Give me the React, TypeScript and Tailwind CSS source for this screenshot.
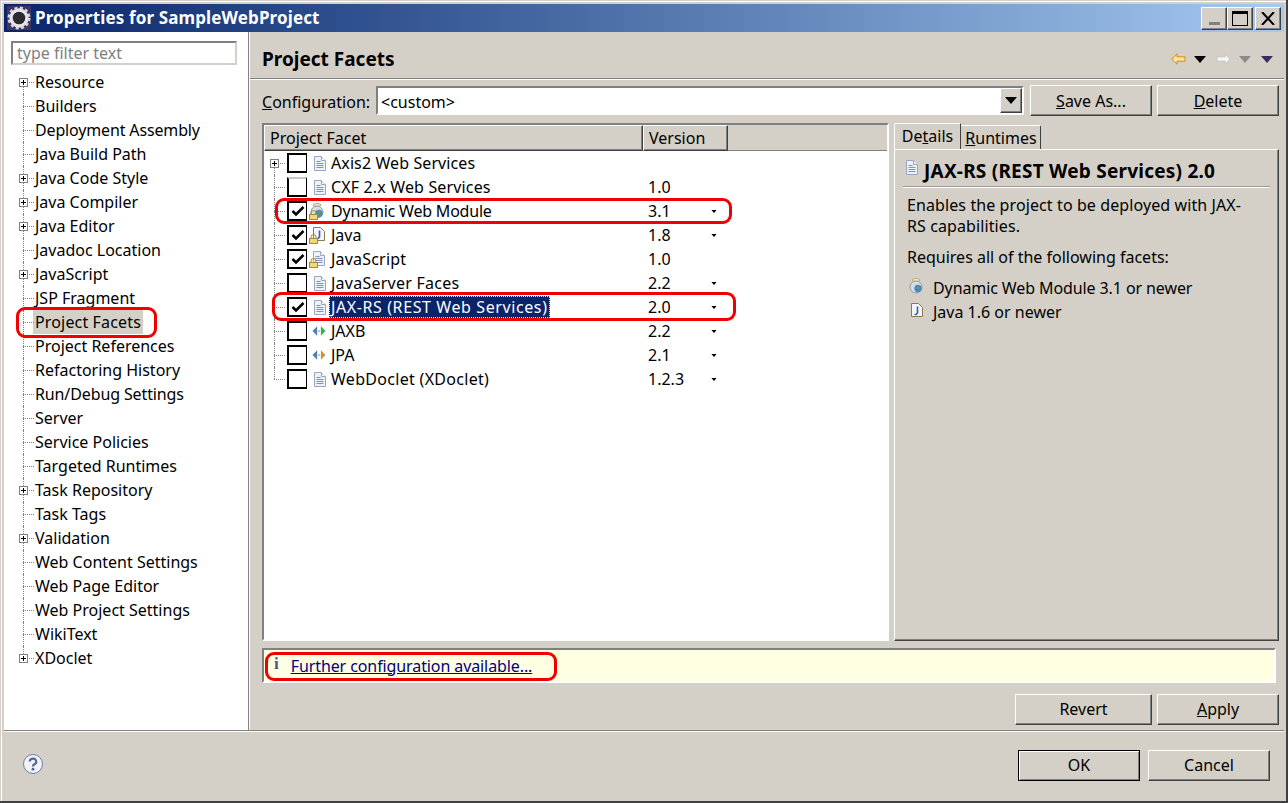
const prefNodes: { label: string; plus?: boolean; selected?: boolean; fit?: string }[] = [
  { label: "Resource", plus: true },
  { label: "Builders" },
  { label: "Deployment Assembly", fit: "tracking-[-0.15px]" },
  { label: "Java Build Path" },
  { label: "Java Code Style", plus: true },
  { label: "Java Compiler", plus: true },
  { label: "Java Editor", plus: true },
  { label: "Javadoc Location" },
  { label: "JavaScript", plus: true },
  { label: "JSP Fragment" },
  { label: "Project Facets", selected: true, fit: "tracking-[0.15px]" },
  { label: "Project References" },
  { label: "Refactoring History" },
  { label: "Run/Debug Settings", fit: "tracking-[-0.12px]" },
  { label: "Server" },
  { label: "Service Policies" },
  { label: "Targeted Runtimes" },
  { label: "Task Repository", plus: true },
  { label: "Task Tags" },
  { label: "Validation", plus: true },
  { label: "Web Content Settings" },
  { label: "Web Page Editor" },
  { label: "Web Project Settings" },
  { label: "WikiText" },
  { label: "XDoclet", plus: true },
];

type IconKind = "doc" | "web" | "java" | "js" | "jaxb" | "jpa";

const facets: {
  label: string;
  version: string;
  icon: IconKind;
  checked?: boolean;
  menu?: boolean;
  plus?: boolean;
  selected?: boolean;
  fit?: string;
}[] = [
  { label: "Axis2 Web Services", version: "", icon: "doc", plus: true, fit: "tracking-[0.1px]" },
  { label: "CXF 2.x Web Services", version: "1.0", icon: "doc", fit: "tracking-[0.15px]" },
  { label: "Dynamic Web Module", version: "3.1", icon: "web", checked: true, menu: true, fit: "tracking-[-0.2px]" },
  { label: "Java", version: "1.8", icon: "java", checked: true, menu: true },
  { label: "JavaScript", version: "1.0", icon: "js", checked: true, fit: "tracking-[0.2px]" },
  { label: "JavaServer Faces", version: "2.2", icon: "doc", menu: true, fit: "tracking-[0.25px]" },
  { label: "JAX-RS (REST Web Services)", version: "2.0", icon: "doc", checked: true, menu: true, selected: true },
  { label: "JAXB", version: "2.2", icon: "jaxb", menu: true },
  { label: "JPA", version: "2.1", icon: "jpa", menu: true },
  { label: "WebDoclet (XDoclet)", version: "1.2.3", icon: "doc", menu: true, fit: "tracking-[0.3px]" },
];

const raised =
  "border border-t-white border-l-white border-r-[#404040] border-b-[#404040] shadow-[inset_-1px_-1px_0_#808080]";

function TreeGuide({ first, last, plus, width }: { first?: boolean; last?: boolean; plus?: boolean; width: number }) {
  return (
    <div className="relative h-full shrink-0" style={{ width }}>
      <div
        className={`absolute left-[4px] border-l border-dotted border-[#808080] ${first ? "top-[12px]" : "top-0"} ${
          last ? "h-[12px]" : "bottom-0"
        }`}
      />
      <div className="absolute left-[4px] top-[12px] w-[11px] border-t border-dotted border-[#808080]" />
      {plus && (
        <div className="absolute left-0 top-[8px] flex h-[9px] w-[9px] items-center justify-center border border-[#808080] bg-white">
          <svg width="7" height="7" viewBox="0 0 7 7">
            <path d="M1 3.5h5M3.5 1v5" stroke="#000" strokeWidth="1" />
          </svg>
        </div>
      )}
    </div>
  );
}

function Doc() {
  return (
    <svg width="12" height="15" viewBox="0 0 12 15">
      <path d="M.5.5h7l4 4v10h-11z" fill="#eef1f8" stroke="#98a6c4" />
      <path d="M7.5.5v4h4" fill="#fff" stroke="#98a6c4" />
      <path d="M2.5 5.5h4M2.5 7.5h7M2.5 9.5h7M2.5 11.5h7" stroke="#7f93bd" />
    </svg>
  );
}

function Lock() {
  return (
    <svg className="absolute bottom-0 left-0" width="9" height="10" viewBox="0 0 9 10">
      <path d="M2 5V3a2.5 2.5 0 0 1 5 0v2" fill="none" stroke="#a98a3a" />
      <rect x=".5" y="4.5" width="8" height="5" fill="#f2d77a" stroke="#a98a3a" />
    </svg>
  );
}

function Globe() {
  return (
    <svg width="15" height="16" viewBox="0 0 15 16">
      <ellipse cx="7" cy="2" rx="4" ry="1.4" fill="#fbf3c8" stroke="#c0a860" />
      <circle cx="7" cy="9" r="6" fill="#d6dde8" stroke="#8a9ab0" />
      <circle cx="9" cy="10.5" r="3.7" fill="#4c86c6" />
      <path d="M7.5 9l2-1.5 2 1-1 2.5-2 .5z" fill="#5ca04a" />
    </svg>
  );
}

function JavaDoc() {
  return (
    <svg width="12" height="14" viewBox="0 0 12 14">
      <path d="M.5.5h7l4 4v9h-11z" fill="#f4f6fc" stroke="#8a7a4a" />
      <path d="M6.5 3.5v6.500l-1.500 1.500H3.5" fill="none" stroke="#2f5fae" strokeWidth="1.6" />
    </svg>
  );
}

function FacetIcon({ kind }: { kind: IconKind }) {
  if (kind === "jaxb" || kind === "jpa") {
    return (
      <div className="flex h-[16px] w-[20px] items-center pl-[3px]">
        <svg width="14" height="10" viewBox="0 0 15 10">
          <path d="M5.5 0v10L.5 5z" fill="#4d7fb5" />
          <path d="M6.5 4.2h2v1.6h-2z" fill="#9bb" />
          <path d="M9.5 0v10l5-5z" fill={kind === "jaxb" ? "#3fae4a" : "#c8933a"} />
        </svg>
      </div>
    );
  }
  if (kind === "doc") {
    return (
      <div className="flex h-[16px] w-[20px] items-center pl-[5px]">
        <Doc />
      </div>
    );
  }
  return (
    <div className="relative flex h-[17px] w-[20px] items-start justify-end pr-[4px]">
      {kind === "web" && <Globe />}
      {kind === "java" && <JavaDoc />}
      {kind === "js" && <Doc />}
      <Lock />
    </div>
  );
}

function CheckBox({ checked, softTop }: { checked?: boolean; softTop?: boolean }) {
  return (
    <div
      className={`mr-[2px] flex h-[20px] w-[20px] shrink-0 items-center justify-center border-l-2 border-r border-b-2 border-t-2 border-black bg-white ${
        softTop ? "border-t-[#c8c8c8]" : ""
      }`}
    >
      {checked && (
        <svg width="14" height="12" viewBox="0 0 14 12">
          <path d="M1.500 6l3.500 3.500 7.500-7.500" fill="none" stroke="#000" strokeWidth="2.600" />
        </svg>
      )}
    </div>
  );
}

function Btn({ children, className }: { children: React.ReactNode; className: string }) {
  return (
    <div className={`flex h-[31px] items-center justify-center bg-[#d4d0c8] ${raised} ${className}`}>{children}</div>
  );
}

function Callout({ className }: { className: string }) {
  return <div className={`absolute rounded-[9px] border-[3px] border-[#f00000] ${className}`} />;
}

function Triangle({ color, className }: { color: string; className?: string }) {
  return (
    <svg className={className} width="12" height="7" viewBox="0 0 12 7">
      <path d="M0 0h12L6 7z" fill={color} />
    </svg>
  );
}

export default function App() {
  return (
    <div className="relative flex h-[803px] w-[1288px] flex-col overflow-hidden border-b-2 border-r-2 border-b-[#404040] border-r-[#404040] bg-[#d4d0c8] pl-[4px] pr-[2px] pt-[4px] font-['Noto_Sans',sans-serif] text-[16px] leading-[24px] text-[#000] shadow-[inset_1px_1px_0_#d4d0c8,inset_2px_2px_0_#fff]">
      {/* title bar */}
      <div className="flex h-[28px] shrink-0 items-center bg-gradient-to-r from-[#0a246a] to-[#a6caf0] pl-[3px] pr-[3px]">
        <svg width="24" height="24" viewBox="0 0 24 24" className="mr-[4px] shrink-0">
          <rect width="24" height="24" fill="#3c3566" />
          <circle cx="12" cy="12" r="8" fill="none" stroke="#e6e6e6" strokeWidth="3.400" />
          <circle cx="12" cy="12" r="10.200" fill="none" stroke="#d8d8d8" strokeWidth="2.600" strokeDasharray="3 2.400" />
          <circle cx="12" cy="12" r="6" fill="#2c2c30" />
        </svg>
        <span className="text-[17px] font-bold leading-[24px] tracking-[0.13px] text-white">
          Properties for SampleWebProject
        </span>
        <div className="ml-auto flex items-center">
          <div className={`flex h-[23px] w-[26px] items-end justify-center bg-[#d4d0c8] pb-[4px] ${raised}`}>
            <div className="h-[3px] w-[11px] bg-[#808080]" />
          </div>
          <div className={`flex h-[23px] w-[26px] items-center justify-center bg-[#d4d0c8] ${raised}`}>
            <div className="h-[15px] w-[16px] border border-t-[3px] border-black" />
          </div>
          <div className={`ml-[2px] flex h-[23px] w-[26px] items-center justify-center bg-[#d4d0c8] ${raised}`}>
            <svg width="14" height="13" viewBox="0 0 14 13">
              <path d="M1 0l12 13M13 0L1 13" stroke="#000" strokeWidth="2" />
            </svg>
          </div>
        </div>
      </div>

      <div className="flex h-[699px] shrink-0 border-b border-[#808080]">
        {/* preference tree */}
        <div className="flex h-full w-[245px] shrink-0 flex-col border-r border-[#808080] bg-white">
          <div className="mx-[7px] mt-[9px] flex h-[24px] w-[226px] items-center border-2 border-b-[#d4d0c8] border-l-[#808080] border-r-[#d4d0c8] border-t-[#808080] px-[4px] text-[#808080]">
            type filter text
          </div>
          <div className="mt-[5px] flex flex-col">
            {prefNodes.map((node, i) => (
              <div key={node.label} className="flex h-[24px] items-center pl-[15px]">
                <TreeGuide first={i === 0} last={i === prefNodes.length - 1} plus={node.plus} width={14} />
                <span className={`px-[2px] ${node.selected ? "bg-[#d4d0c8]" : ""} ${node.fit ?? ""}`}>{node.label}</span>
              </div>
            ))}
          </div>
        </div>

        {/* facets page */}
        <div className="flex min-w-0 flex-1 flex-col border-l border-white">
          <div className="flex h-[47px] shrink-0 items-center justify-between border-b border-[#808080] pl-[12px] pr-[11px] pt-[8px]">
            <span className="text-[19px] font-bold">Project Facets</span>
            <div className="flex items-center">
              <svg width="15" height="12" viewBox="0 0 15 12" className="mr-[8px]">
                <path d="M.8 6L6 .8v3h8v4.400H6v3z" fill="#fde3a4" stroke="#d08a1a" />
              </svg>
              <Triangle color="#000" className="mr-[10px]" />
              <svg width="15" height="12" viewBox="0 0 15 12" className="mr-[8px]">
                <path d="M14.200 6L9 .8v3H1v4.400h8v3z" fill="#f4f4f4" stroke="#c4c4c4" />
              </svg>
              <Triangle color="#8c8c8c" className="mr-[10px]" />
              <Triangle color="#3a2a60" />
            </div>
          </div>

          <div className="flex min-h-0 flex-1 flex-col border-t border-white pl-[12px] pr-[5px]">
            <div className="mt-[5px] flex h-[31px] shrink-0 items-center">
              <span className="w-[114px] pt-[2px]">
                <u>C</u>onfiguration:
              </span>
              <div className="flex h-[29px] w-[648px] items-center justify-between border-2 border-b-white border-l-[#808080] border-r-white border-t-[#808080] bg-white pl-[3px] pr-0">
                <span className="pt-[2px]">&lt;custom&gt;</span>
                <div className={`flex h-[25px] w-[22px] items-center justify-center bg-[#d4d0c8] ${raised}`}>
                  <Triangle color="#000" />
                </div>
              </div>
              <Btn className="ml-[6px] w-[122px]">
                <span>
                  <u>S</u>ave As...
                </span>
              </Btn>
              <Btn className="ml-[5px] w-[122px]">
                <span>
                  <u>D</u>elete
                </span>
              </Btn>
            </div>

            <div className="mt-[7px] flex h-[518px] shrink-0">
              {/* facet table */}
              <div className="flex h-full w-[627px] shrink-0 flex-col border-2 border-b-white border-l-[#808080] border-r-white border-t-[#808080] bg-white">
                <div className="flex h-[26px] shrink-0 bg-[#d4d0c8]">
                  <div className={`w-[379px] pl-[5px] ${raised}`}>Project Facet</div>
                  <div className={`w-[85px] pl-[5px] ${raised}`}>Version</div>
                  <div className="flex-1 border-b border-[#808080] border-t-white" />
                </div>
                {facets.map((facet, i) => (
                  <div key={facet.label} className="flex h-[24px] shrink-0 items-center">
                    <div className="flex h-full w-[379px] shrink-0 items-center pl-[6px]">
                      <TreeGuide first={i === 0} last={i === facets.length - 1} plus={facet.plus} width={17} />
                      <CheckBox checked={facet.checked} softTop={i === 1} />
                      <FacetIcon kind={facet.icon} />
                      <span
                        className={
                          facet.selected
                            ? "h-[22px] border border-dotted border-[#f5db95] bg-[#0a246a] px-[1px] leading-[20px] tracking-[0.6px] text-white"
                            : `ml-[2px] ${facet.fit ?? ""}`
                        }
                      >
                        {facet.label}
                      </span>
                    </div>
                    <div className="flex h-full w-[68px] shrink-0 items-center pl-[5px]">{facet.version}</div>
                    {facet.menu && <Triangle color="#000" className="h-[3px] w-[6px]" />}
                  </div>
                ))}
              </div>

              {/* details tabs */}
              <div className="ml-[5px] flex h-full w-[385px] shrink-0 flex-col">
                <div className="flex h-[27px] shrink-0 items-end">
                  <div className="flex h-[27px] w-[67px] items-start justify-center rounded-tl-[2px] border-l border-t border-r border-l-white border-t-white border-r-[#404040]">
                    <span>
                      De<u>t</u>ails
                    </span>
                  </div>
                  <div className="flex h-[25px] w-[80px] items-center justify-center rounded-tr-[2px] border-r border-t border-r-[#404040] border-t-white pl-px">
                    <span>
                      <u>R</u>untimes
                    </span>
                  </div>
                </div>
                <div className="-mt-px flex min-h-0 flex-1 flex-col border border-b-[#404040] border-l-white border-r-[#404040] border-t-white pl-[12px] pr-[8px] shadow-[inset_-1px_-1px_0_#808080]">
                  <div className="-ml-[4px] flex h-[37px] shrink-0 items-center border-b border-[#9a9a9a] pt-[5px] shadow-[0_1px_0_#fff]">
                    <div className="mb-[6px] ml-[3px] mr-[6px]">
                      <Doc />
                    </div>
                    <span className="text-[19px] font-bold tracking-[0.23px]">JAX-RS (REST Web Services) 2.0</span>
                  </div>
                  <p className="mt-[8px] leading-[21px] tracking-[0.1px]">
                    Enables the project to be deployed with JAX-
                    <br />
                    RS capabilities.
                  </p>
                  <p className="mt-[10px] leading-[21px]">Requires all of the following facets:</p>
                  <div className="mt-[8px] flex h-[24px] items-center tracking-[-0.1px]">
                    <div className="mb-[4px] ml-[2px] mr-[9px] w-[15px]">
                      <Globe />
                    </div>
                    Dynamic Web Module 3.1 or newer
                  </div>
                  <div className="flex h-[24px] items-center">
                    <div className="mb-[4px] ml-[4px] mr-[10px] w-[12px]">
                      <JavaDoc />
                    </div>
                    Java 1.6 or newer
                  </div>
                </div>
              </div>
            </div>

            {/* status line */}
            <div className="mt-[7px] flex h-[35px] w-[1014px] shrink-0 items-center border-2 border-b-white border-l-[#808080] border-r-white border-t-[#808080] bg-[#ffffe1] pl-[10px]">
              <span className="mb-[4px] mr-[12px] font-['Liberation_Serif',serif] text-[17px] font-bold text-[#44598f]">
                i
              </span>
              <span className="tracking-[-0.1px] text-[#000080] underline">Further configuration available...</span>
            </div>

            <div className="mt-[11px] flex shrink-0 justify-end gap-[5px]">
              <Btn className="w-[137px] pb-[2px]">Revert</Btn>
              <Btn className="w-[122px] pb-[2px]">
                <span>
                  <u>A</u>pply
                </span>
              </Btn>
            </div>
          </div>
        </div>
      </div>

      {/* dialog buttons */}
      <div className="flex min-h-0 flex-1 items-start border-t border-white pl-[19px] pr-[14px] pt-[18px]">
        <svg width="20" height="20" viewBox="0 0 20 20" className="mt-[4px]">
          <circle cx="10" cy="10" r="9.500" fill="#f0f2f7" stroke="#6c7fa3" />
          <path d="M6.800 7.500a3.200 3 0 1 1 4.600 2.800c-1 .6-1.400 1-1.400 2.200" fill="none" stroke="#51678f" strokeWidth="2.200" />
          <circle cx="10" cy="15.200" r="1.400" fill="#51678f" />
        </svg>
        <div className="ml-auto flex gap-[8px]">
          <div className="flex h-[31px] w-[122px] items-center justify-center border border-black bg-[#d4d0c8] pb-[2px] shadow-[inset_1px_1px_0_#fff,inset_-1px_-1px_0_#808080]">
            OK
          </div>
          <Btn className="w-[122px] pb-[2px]">Cancel</Btn>
        </div>
      </div>

      {/* annotation outlines */}
      <Callout className="left-[16px] top-[307px] h-[31px] w-[141px]" />
      <Callout className="left-[275px] top-[198px] h-[26px] w-[457px]" />
      <Callout className="left-[272px] top-[292px] h-[29px] w-[464px]" />
      <Callout className="left-[265px] top-[652px] h-[29px] w-[292px]" />
    </div>
  );
}
